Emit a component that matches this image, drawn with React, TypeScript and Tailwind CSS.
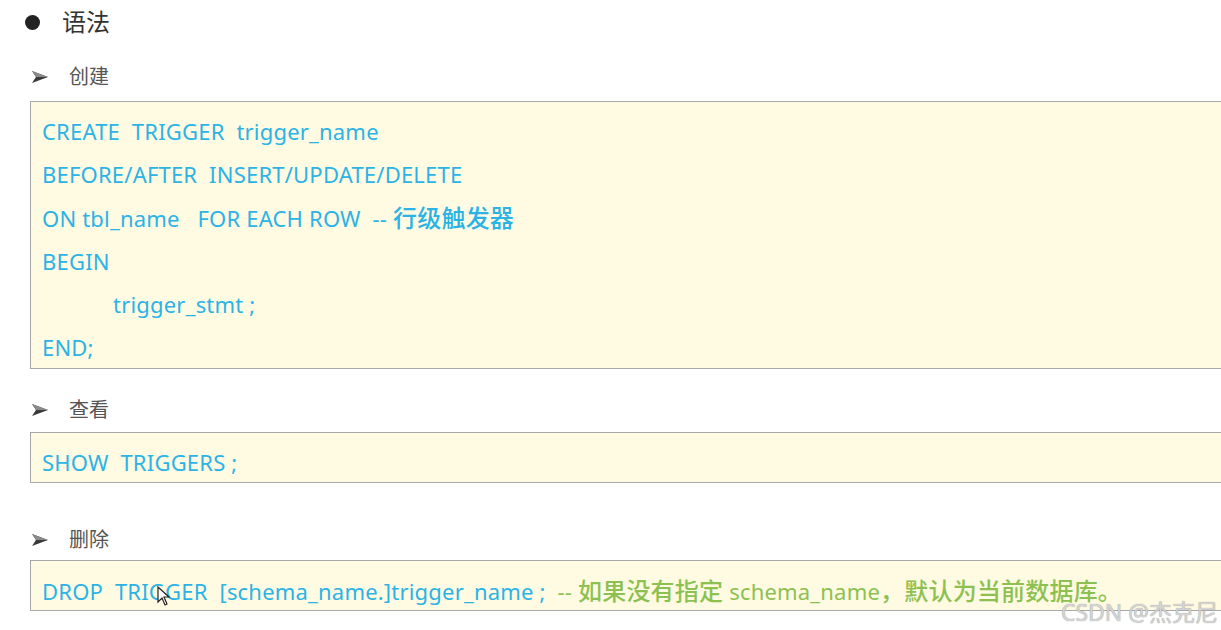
import React from "react";

const code = "text-[#2bb3e6]";
const green = "text-[#8cc152]";
const cjk = "text-[24px] font-medium";

const Arrow = () => (
  <svg width="16" height="12" viewBox="0 0 16 12" className="shrink-0">
    <polygon points="0,0 16,6 0,12 4,6" fill="#3a3a3a" />
    <polygon points="0,0 16,6 4,6" fill="#8a8a8a" />
  </svg>
);

const SubTitle = ({ label, className }: { label: string; className: string }) => (
  <div className={`flex items-center pl-[32px] ${className}`}>
    <Arrow />
    <span className="ml-[21px] text-[20px] text-[#555]">{label}</span>
  </div>
);

const CodeBox = ({ children, className }: { children: React.ReactNode; className: string }) => (
  <div
    className={`ml-[30px] border-t border-b border-l border-[#a8a8a8] bg-[#fffbe2] pl-[11px] leading-[43px] text-[22px] tracking-[0.2px] whitespace-pre ${code} ${className}`}
  >
    {children}
  </div>
);

export default function App() {
  return (
    <div
      className="relative w-[1221px] h-[630px] overflow-hidden bg-white"
      style={{ fontFamily: '"Noto Sans", "Noto Sans CJK SC", sans-serif' }}
    >
      <div className="flex h-[44px] items-center pl-[25px]">
        <span className="h-[15px] w-[15px] rounded-full bg-[#222]" />
        <span className="ml-[22px] text-[24px] text-[#333]">语法</span>
      </div>

      <SubTitle label="创建" className="mt-[11px] h-[44px]" />
      <CodeBox className="mt-[2px] h-[268px] pt-[8px]">
        <div>CREATE  TRIGGER  trigger_name</div>
        <div>BEFORE/AFTER  INSERT/UPDATE/DELETE</div>
        <div>
          ON tbl_name   FOR EACH ROW  -- <span className={cjk}>行级触发器</span>
        </div>
        <div>BEGIN</div>
        <div className="pl-[71px]">trigger_stmt ;</div>
        <div>END;</div>
      </CodeBox>

      <SubTitle label="查看" className="mt-[19px] h-[44px]" />
      <CodeBox className="h-[51px] pt-[8px]">
        <div>SHOW  TRIGGERS ;</div>
      </CodeBox>

      <SubTitle label="删除" className="mt-[37px] h-[40px]" />
      <CodeBox className="h-[51px] pt-[8px]">
        <div>
          DROP  TRIGGER  [schema_name.]trigger_name ;  <span className={green}>-- </span>
          <span className={`${green} ${cjk}`}>如果没有指定</span>
          <span className={green}> schema_name</span>
          <span className={`${green} ${cjk}`}>，默认为当前数据库。</span>
        </div>
      </CodeBox>

      <svg width="14" height="20" viewBox="0 0 14 20" className="absolute left-[157px] top-[586px]">
        <path d="M1 1 L1 16 L5 12 L8 19 L10 18 L7 11 L12 11 Z" fill="#fff" stroke="#222" strokeWidth="1.2" />
      </svg>

      <div
        className="absolute right-[3px] top-[595px] text-[23px] text-[#d4d4d4]"
        style={{ textShadow: "0 0 1px #8a8a8a" }}
      >
        CSDN @杰克尼
      </div>
    </div>
  );
}
